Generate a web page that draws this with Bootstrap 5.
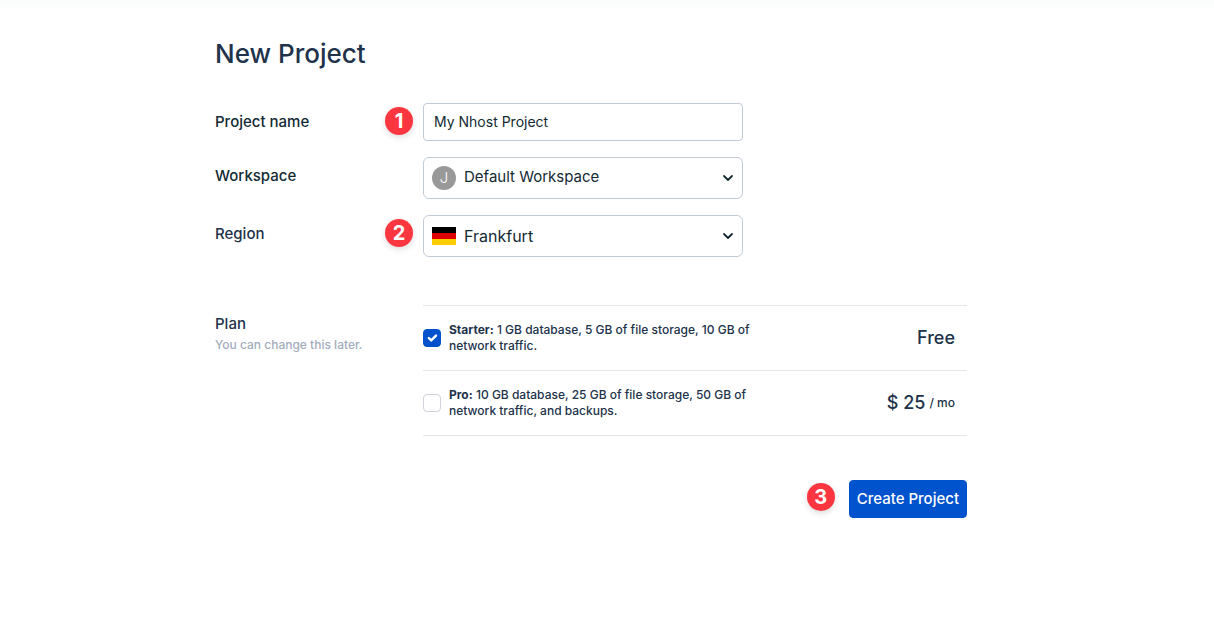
<!DOCTYPE html>
<html lang="en">
<head>
<meta charset="utf-8">
<meta name="viewport" content="width=device-width, initial-scale=1">
<title>New Project</title>
<link href="https://cdn.jsdelivr.net/npm/bootstrap@5.3.0/dist/css/bootstrap.min.css" rel="stylesheet">
<style>
  :root { --ink: #21324b; --ink-dark: #132a33; --line: #c2cad6; --brand: #0052cd; --marker: #fb3640; }
  body { font-family: Inter, "Liberation Sans", sans-serif; font-size: 15px; line-height: 24px; color: var(--ink); background: linear-gradient(#fafcfc, #fff 12px) no-repeat #fff; }
  .project-form { max-width: 784px; padding: 36px 32px 48px 0; }
  .page-title { font-size: 26px; line-height: 35px; font-weight: 500; margin-bottom: 32px; }
  .form-line { display: grid; grid-template-columns: 208px minmax(0, 1fr); margin-bottom: 16px; }
  .form-line > label, .plan-title { font-weight: 500; }
  .form-line > label { padding-top: 7px; }
  .ink-dark { color: var(--ink-dark); }
  .field { position: relative; max-width: 320px; }
  .field .form-control, .field .form-select { border-color: var(--line); color: var(--ink-dark); box-shadow: none; }
  .field .form-control { height: 38px; border-radius: 4px; padding: 0 10px 2px; font-size: 14px; }
  .field .form-select { height: 42px; border-radius: 6px; padding: 0 32px 0 40px; font-size: 15px; line-height: 24px; background-image: none; }
  .field .region-select { font-size: 16px; }
  .field .workspace-select { padding-bottom: 2px; }
  .lead-icon, .chevron { position: absolute; pointer-events: none; top: 50%; transform: translateY(-50%); }
  .lead-icon { left: 9px; }
  .chevron { right: 9px; }
  .avatar { width: 24px; height: 24px; font-size: 15px; line-height: 24px; font-weight: 300; background: #999; color: #fff; }
  .marker { position: absolute; width: 28px; height: 28px; border-radius: 50%; background: var(--marker); color: #fff; font-size: 20px; line-height: 28px; font-weight: 700; text-align: center; box-shadow: 0 2px 6px rgba(0, 0, 0, .15); }
  .field .marker { right: calc(100% + 10px); top: 4px; }
  .submit-wrap .marker { right: calc(100% + 14px); top: 3px; }
  .plan-block { margin-top: 48px; }
  .plan-title { padding-top: 7px; }
  .plan-note { font-size: 12px; line-height: 18px; color: #a2acbb; font-weight: 500; }
  .plan-list { border-top: 1px solid #e3e5e8; }
  .plan-row { height: 65px; padding-right: 12px; border-bottom: 1px solid #e3e5e8; }
  .plan-row .form-check-input { width: 18px; height: 18px; margin: 0; border-color: #d0d2dc; border-radius: 4px; box-shadow: none; }
  .plan-row .form-check-input:checked { background-color: var(--brand); border-color: var(--brand); }
  .plan-text { font-size: 12px; line-height: 16px; font-weight: 500; max-width: 312px; }
  .plan-price { font-size: 18px; font-weight: 500; white-space: nowrap; }
  .plan-price small { font-size: 12px; }
  .form-actions { padding-top: 28px; }
  .create-btn { --bs-btn-bg: var(--brand); --bs-btn-border-color: var(--brand); --bs-btn-border-radius: 4px; --bs-btn-font-size: 15px; --bs-btn-font-weight: 500; --bs-btn-line-height: 24px; --bs-btn-padding-x: 7px; --bs-btn-padding-y: 6px; }
</style>
</head>
<body>
<main class="project-form mx-auto">
  <h1 class="page-title">New Project</h1>
  <form>
    <div class="form-line">
      <label class="ink-dark" for="projectName">Project name</label>
      <div class="field">
        <span class="marker">1</span>
        <input class="form-control" id="projectName" type="text" value="My Nhost Project">
      </div>
    </div>
    <div class="form-line">
      <label class="ink-dark" for="workspace">Workspace</label>
      <div class="field">
        <select class="form-select workspace-select" id="workspace"><option>Default Workspace</option></select>
        <span class="lead-icon avatar rounded-circle text-center" aria-hidden="true">J</span>
        <svg class="chevron" width="12" height="12" viewBox="0 0 12 12" fill="none" stroke="#132a33" stroke-width="1.8" stroke-linecap="round" stroke-linejoin="round" aria-hidden="true"><path d="M2 4l4 4 4-4"/></svg>
      </div>
    </div>
    <div class="form-line">
      <label for="region">Region</label>
      <div class="field">
        <span class="marker">2</span>
        <select class="form-select region-select" id="region"><option>Frankfurt</option></select>
        <svg class="lead-icon" width="24" height="18" viewBox="0 0 24 18" aria-hidden="true"><path fill="#000" d="M0 0h24v6H0z"/><path fill="#d00" d="M0 6h24v6H0z"/><path fill="#ffce00" d="M0 12h24v6H0z"/></svg>
        <svg class="chevron" width="12" height="12" viewBox="0 0 12 12" fill="none" stroke="#132a33" stroke-width="1.8" stroke-linecap="round" stroke-linejoin="round" aria-hidden="true"><path d="M2 4l4 4 4-4"/></svg>
      </div>
    </div>
    <div class="form-line plan-block">
      <div>
        <div class="plan-title">Plan</div>
        <div class="plan-note">You can change this later.</div>
      </div>
      <div class="plan-list">
        <div class="plan-row d-flex align-items-center gap-2">
          <input class="form-check-input flex-shrink-0" type="checkbox" id="planStarter" checked>
          <label class="plan-text" for="planStarter"><b>Starter:</b> 1 GB database, 5 GB of file storage, 10 GB of network traffic.</label>
          <span class="plan-price ms-auto">Free</span>
        </div>
        <div class="plan-row d-flex align-items-center gap-2">
          <input class="form-check-input flex-shrink-0" type="checkbox" id="planPro">
          <label class="plan-text" for="planPro"><b>Pro:</b> 10 GB database, 25 GB of file storage, 50 GB of network traffic, and backups.</label>
          <span class="plan-price d-flex align-items-center gap-1 ms-auto">$ 25 <small>/ mo</small></span>
        </div>
      </div>
    </div>
    <div class="form-actions d-flex justify-content-end">
      <div class="submit-wrap position-relative">
        <span class="marker">3</span>
        <button class="btn btn-primary create-btn" type="submit">Create Project</button>
      </div>
    </div>
  </form>
</main>
<script src="https://cdn.jsdelivr.net/npm/bootstrap@5.3.0/dist/js/bootstrap.bundle.min.js"></script>
</body>
</html>
